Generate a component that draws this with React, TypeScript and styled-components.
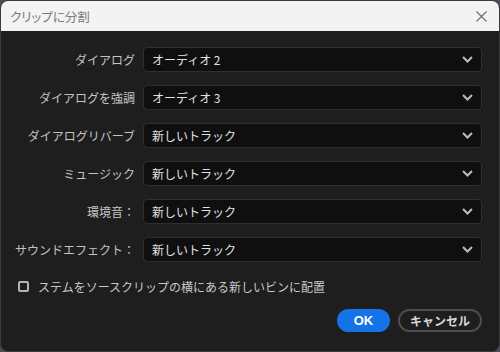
import { Fragment } from "react"
import styled, { createGlobalStyle } from "styled-components"

const Global = createGlobalStyle`
  html, body {
    margin: 0;
    padding: 0;
    background: #4a4f57;
  }
  body {
    font-family: "Noto Sans CJK JP", "Noto Sans", sans-serif;
  }
`

const Window = styled.div`
  width: 500px;
  height: 352px;
  box-sizing: border-box;
  border: 1px solid #3a3a3a;
  border-radius: 8px;
  overflow: hidden;
  background: #1e1e1e;
  display: flex;
  flex-direction: column;
`

const TitleBar = styled.div`
  height: 30px;
  background: #f3f3f3;
  display: flex;
  align-items: center;
  justify-content: space-between;
  padding: 0 12px 0 9px;
  color: #7a7a7a;
  font-size: 12.5px;
  font-feature-settings: "palt";
`

const Close = styled.div`
  width: 12px;
  height: 12px;
  display: flex;
  align-items: center;
  justify-content: center;
`

const Body = styled.div`
  flex: 1;
  padding: 16px 17px 0 7px;
  display: flex;
  flex-direction: column;
`

const Grid = styled.div`
  display: grid;
  grid-template-columns: 127px 1fr;
  column-gap: 8px;
  row-gap: 13px;
  align-items: center;
`

const Label = styled.div`
  text-align: right;
  color: #c4c4c4;
  font-size: 12px;
  white-space: nowrap;
`

const Select = styled.div`
  height: 25px;
  box-sizing: border-box;
  background: #0f0f0f;
  border: 1px solid #2f2f2f;
  border-radius: 4px;
  display: flex;
  align-items: center;
  justify-content: space-between;
  padding: 0 8px 0 8px;
  color: #e2e2e2;
  font-size: 12px;
`

const CheckRow = styled.label`
  display: flex;
  align-items: center;
  gap: 9px;
  margin: 16px 0 0 10px;
  color: #c8c8c8;
  font-size: 12px;
  white-space: nowrap;
`

const Box = styled.span`
  width: 11px;
  height: 11px;
  box-sizing: border-box;
  border: 2px solid #b4b4b4;
  border-radius: 2px;
  background: #1e1e1e;
`

const Actions = styled.div`
  display: flex;
  justify-content: flex-end;
  gap: 8px;
  margin-top: 14px;
`

const Button = styled.div<{ $primary?: boolean }>`
  height: 23px;
  box-sizing: border-box;
  border-radius: 12px;
  display: flex;
  align-items: center;
  justify-content: center;
  font-weight: 700;
  white-space: nowrap;
  font-size: ${p => (p.$primary ? "13px" : "12px")};
  width: ${p => (p.$primary ? "53px" : "84px")};
  background: ${p => (p.$primary ? "#1473e6" : "transparent")};
  border: ${p => (p.$primary ? "none" : "2px solid #4d4d4d")};
  color: ${p => (p.$primary ? "#fff" : "#d8d8d8")};
  font-family: ${p => (p.$primary ? '"Liberation Sans", sans-serif' : '"Noto Sans CJK JP", sans-serif')};
`

const Chevron = () => (
  <svg width="11" height="7" viewBox="0 0 11 7">
    <path d="M1 1 L5.5 5.5 L10 1" fill="none" stroke="#bdbdbd" strokeWidth="2" />
  </svg>
)

const rows = [
  ["ダイアログ", "オーディオ 2"],
  ["ダイアログを強調", "オーディオ 3"],
  ["ダイアログリバーブ", "新しいトラック"],
  ["ミュージック", "新しいトラック"],
  ["環境音：", "新しいトラック"],
  ["サウンドエフェクト：", "新しいトラック"],
]

const App = () => {
  return (
    <Window>
      <Global />
      <TitleBar>
        <span>クリップに分割</span>
        <Close>
          <svg width="11" height="11" viewBox="0 0 11 11">
            <path d="M0.5 0.5 L10.5 10.5 M10.5 0.5 L0.5 10.5" stroke="#6e6e6e" strokeWidth="1.1" />
          </svg>
        </Close>
      </TitleBar>
      <Body>
        <Grid>
          {rows.map(([label, value]) => (
            <Fragment key={label}>
              <Label>{label}</Label>
              <Select>
                <span>{value}</span>
                <Chevron />
              </Select>
            </Fragment>
          ))}
        </Grid>
        <CheckRow>
          <Box />
          ステムをソースクリップの横にある新しいビンに配置
        </CheckRow>
        <Actions>
          <Button $primary>OK</Button>
          <Button>キャンセル</Button>
        </Actions>
      </Body>
    </Window>
  )
}
export default App
